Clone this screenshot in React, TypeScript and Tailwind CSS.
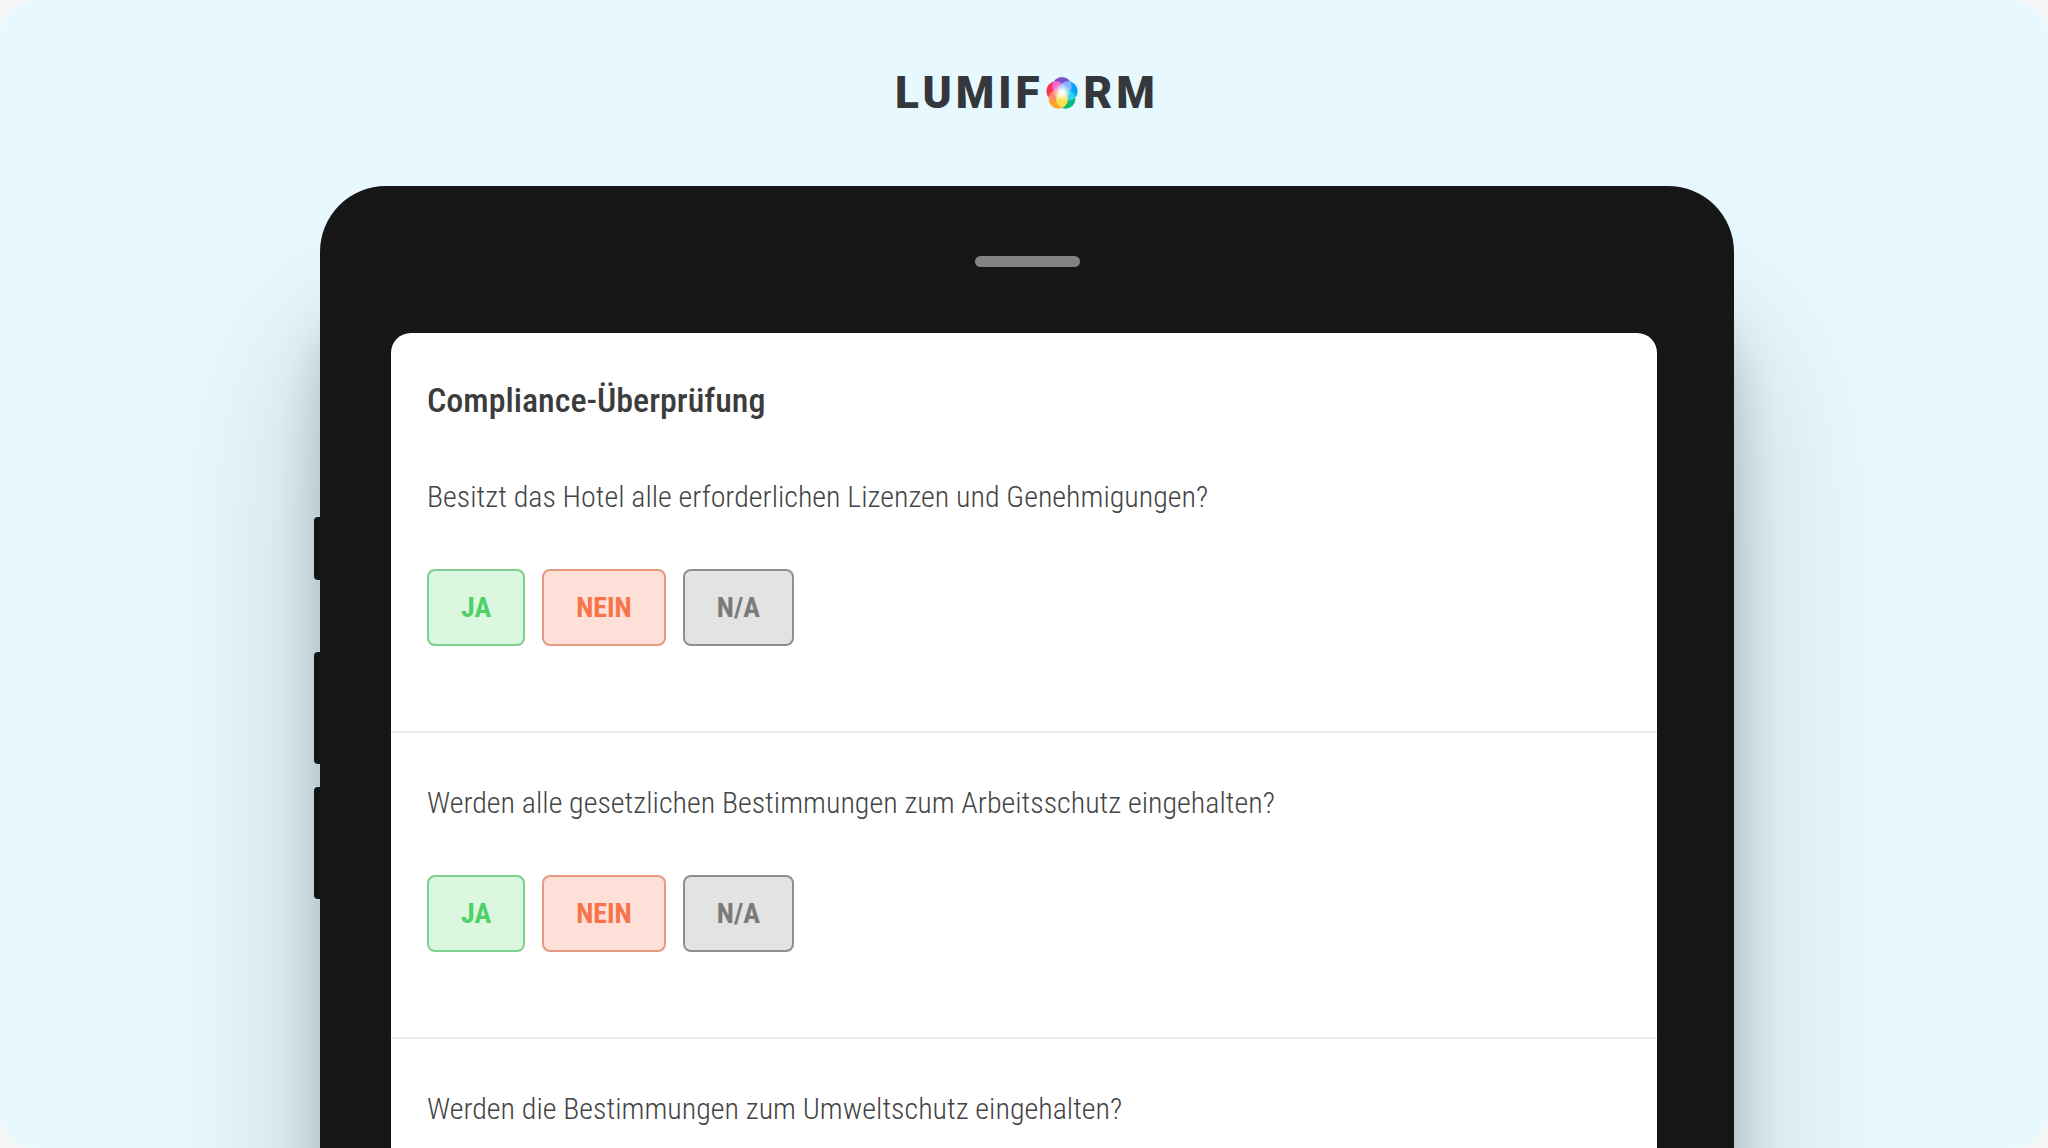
import React, { useState } from 'react';

interface Answer {
  label: string;
  theme: string;
}

interface Question {
  id: string;
  text: string;
  answers: Answer[];
}

const defaultAnswers: Answer[] = [
  { label: 'JA', theme: 'bg-[#dbf7df] border-[#7fcf90] text-[#4fd168]' },
  { label: 'NEIN', theme: 'bg-[#ffe0d9] border-[#e39a80] text-[#f8734a]' },
  { label: 'N/A', theme: 'bg-[#e3e3e3] border-[#8f8f8f] text-[#7a7a7a]' },
];

const questions: Question[] = [
  { id: 'licences', text: 'Besitzt das Hotel alle erforderlichen Lizenzen und Genehmigungen?', answers: defaultAnswers },
  { id: 'safety', text: 'Werden alle gesetzlichen Bestimmungen zum Arbeitsschutz eingehalten?', answers: defaultAnswers },
  { id: 'environment', text: 'Werden die Bestimmungen zum Umweltschutz eingehalten?', answers: [] },
];

const LogoMark: React.FC = () => (
  <svg viewBox="0 0 32 32" className="mr-1.5 ml-0.5 size-8" aria-hidden="true">
    <clipPath id="petal-top"><circle cx="16" cy="9.7" r="9.7" /></clipPath>
    <clipPath id="petal-left"><circle cx="10" cy="14" r="9.7" /></clipPath>
    <clipPath id="petal-right"><circle cx="22" cy="14" r="9.7" /></clipPath>
    <clipPath id="petal-bottom"><circle cx="12.3" cy="22" r="9.7" /></clipPath>
    <radialGradient id="glow">
      <stop offset="0.2" stopColor="#fff" />
      <stop offset="1" stopColor="#fff" stopOpacity="0" />
    </radialGradient>
    <circle cx="16" cy="9.7" r="9.7" fill="#7b52c8" />
    <circle cx="10" cy="14" r="9.7" fill="#f5315c" />
    <circle cx="22" cy="14" r="9.7" fill="#08a4fb" />
    <circle cx="19.7" cy="22" r="9.7" fill="#08bd7c" />
    <circle cx="12.3" cy="22" r="9.7" fill="#ffa32b" />
    {/* lighter tints where neighbouring petals overlap */}
    <circle cx="10" cy="14" r="9.7" fill="#f36bd0" clipPath="url(#petal-top)" />
    <circle cx="22" cy="14" r="9.7" fill="#82b4ff" clipPath="url(#petal-top)" />
    <circle cx="19.7" cy="22" r="9.7" fill="#2fd3f0" clipPath="url(#petal-right)" />
    <circle cx="12.3" cy="22" r="9.7" fill="#ff8a70" clipPath="url(#petal-left)" />
    <circle cx="19.7" cy="22" r="9.7" fill="#f5e04e" clipPath="url(#petal-bottom)" />
    <circle cx="16" cy="15.5" r="9" fill="url(#glow)" />
  </svg>
);

const Logo: React.FC = () => (
  <div className="flex items-center justify-center pl-1.5 font-['Roboto',sans-serif] text-[44px] leading-[48px] font-black tracking-[4px] text-[#34373b]">
    <span>LUMIF</span>
    <LogoMark />
    <span>RM</span>
  </div>
);

const QuestionRow: React.FC<{ question: Question }> = ({ question }) => {
  const [selected, setSelected] = useState<string | null>(null);

  return (
    <section className="border-b-2 border-[#ececec] px-9 pb-[85px] last:border-0">
      <p className="text-[30px] leading-[40px] font-light text-[#444]">{question.text}</p>
      {question.answers.length > 0 && (
        <div className="mt-[52px] flex gap-[17px]">
          {question.answers.map((answer) => (
            <button
              key={answer.label}
              type="button"
              aria-pressed={selected === answer.label}
              onClick={() => setSelected(answer.label)}
              className={`h-[77px] rounded-lg border-2 px-8 text-[28px] font-bold ${answer.theme}`}
            >
              {answer.label}
            </button>
          ))}
        </div>
      )}
    </section>
  );
};

const Tablet: React.FC = () => (
  <div className="mx-auto flex w-full max-w-[1420px] flex-1">
    {/* side buttons */}
    <div className="relative z-10 w-[6px] shrink-0 pt-[331px]">
      <div className="h-[63px] rounded-l-sm bg-[#0f1414]" />
      <div className="mt-[72px] h-28 rounded-l-sm bg-[#0f1414]" />
      <div className="mt-[23px] h-28 rounded-l-sm bg-[#0f1414]" />
    </div>
    <div className="flex flex-1 flex-col rounded-t-[66px] bg-[#161616] shadow-[0_150px_170px_rgba(0,0,0,0.2),0_130px_50px_rgba(0,0,0,0.18)]">
      <div className="mx-auto mt-[70px] h-[11px] w-[105px] rounded-full bg-[#838383]" />
      <main className="mt-[66px] mr-[77px] ml-[71px] flex-1 rounded-t-[20px] bg-white pt-[43px]">
        <h1 className="px-9 text-[34px] leading-[48px] font-medium text-[#3c3c3c]">Compliance-Überprüfung</h1>
        <div className="flex flex-col gap-[50px] pt-[53px]">
          {questions.map((question) => (
            <QuestionRow key={question.id} question={question} />
          ))}
        </div>
      </main>
    </div>
  </div>
);

const App: React.FC = () => (
  <div className="h-screen bg-[#f5f5f5] font-['Roboto_Condensed','Roboto',sans-serif]">
    <div className="flex h-full flex-col overflow-hidden rounded-[36px] bg-[#e7f9ff]">
      <header className="pt-[69px] pb-[69px]">
        <Logo />
      </header>
      <Tablet />
    </div>
  </div>
);

export default App;
